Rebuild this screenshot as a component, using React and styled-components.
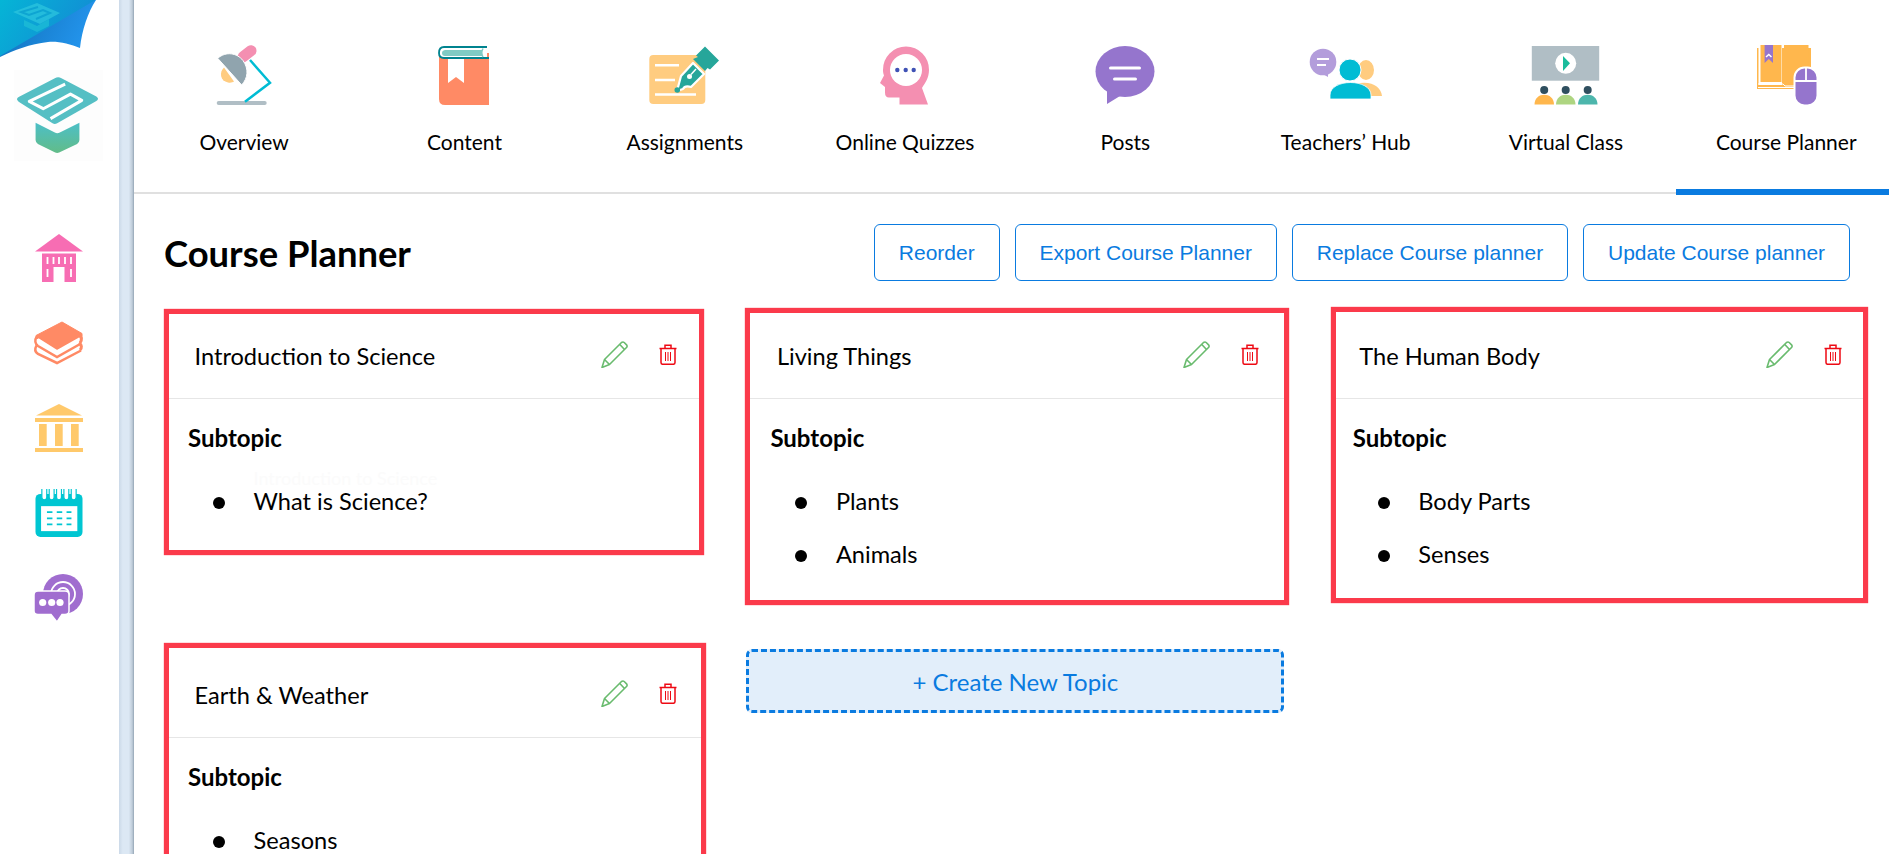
import styled, { createGlobalStyle } from "styled-components"

const GlobalStyle = createGlobalStyle`
  * { box-sizing: border-box; }
  html, body { margin: 0; height: 854px; overflow: hidden; background: #fff; }
  body { font-family: "Lato", "Liberation Sans", sans-serif; color: #000; }
`

const tabs = [
  { label: "Overview", icon: LampIcon },
  { label: "Content", icon: BookIcon },
  { label: "Assignments", icon: PenIcon },
  { label: "Online Quizzes", icon: HeadIcon },
  { label: "Posts", icon: BubbleIcon },
  { label: "Teachers’ Hub", icon: PeopleIcon },
  { label: "Virtual Class", icon: ClassIcon },
  { label: "Course Planner", icon: PlannerIcon, active: true },
]

const actions = ["Reorder", "Export Course Planner", "Replace Course planner", "Update Course planner"]

const topics = [
  { name: "Introduction to Science", items: ["What is Science?"], ghost: "Introduction to Science", mark: { top: -2.5, left: -3.5, right: -2, height: 246.2 } },
  { name: "Living Things", items: ["Plants", "Animals"], mark: { top: -2.7, left: -5, right: -4.7, height: 296.4 } },
  { name: "The Human Body", items: ["Body Parts", "Senses"], mark: { top: -4.3, left: -1.7, right: -0.8, height: 296 } },
  { name: "Earth & Weather", items: ["Seasons"], mark: { top: -7.3, left: -3.5, right: -4, height: 300 } },
]

export default function App() {
  return (
    <Page>
      <GlobalStyle />
      <Ribbon />
      <Sidebar>
        <LogoBox><Logo /></LogoBox>
        <SideIcons>
          <SchoolIcon />
          <StackIcon />
          <ColumnsIcon />
          <CalendarIcon />
          <TalkIcon />
        </SideIcons>
      </Sidebar>
      <Strip />
      <Main>
        <TabBar>
          {tabs.map((t) => (
            <Tab key={t.label} $active={t.active}>
              <t.icon />
              <TabLabel>{t.label}</TabLabel>
            </Tab>
          ))}
        </TabBar>
        <TitleRow>
          <Title>Course Planner</Title>
          <Actions>
            {actions.map((a) => <ActionButton key={a}>{a}</ActionButton>)}
          </Actions>
        </TitleRow>
        <Board>
          {topics.slice(0, 3).map((t) => <TopicCard key={t.name} topic={t} />)}
          <TopicCard topic={topics[3]} />
          <CreateTopic>+ Create New Topic</CreateTopic>
        </Board>
      </Main>
    </Page>
  )
}

function TopicCard({ topic }) {
  return (
    <Card>
      <CardHead>
        <CardTitle>{topic.name}</CardTitle>
        <CardTools>
          <PencilIcon />
          <TrashIcon />
        </CardTools>
      </CardHead>
      <CardBody>
        <Subtopic>Subtopic</Subtopic>
        <SubList>
          {topic.items.map((i) => (
            <SubItem key={i}>
              {topic.ghost && <Ghost>{topic.ghost}</Ghost>}
              {i}
            </SubItem>
          ))}
        </SubList>
      </CardBody>
      <RedMark $top={topic.mark.top} $left={topic.mark.left} $right={topic.mark.right} $height={topic.mark.height} />
    </Card>
  )
}

/* ---- icons ---- */

function Ribbon() {
  return (
    <RibbonSvg viewBox="0 0 100 60">
      <defs>
        <linearGradient id="ribA" x1="0" y1="0" x2="1" y2="0.4">
          <stop offset="0" stopColor="#05b5d6" />
          <stop offset="1" stopColor="#138bd4" />
        </linearGradient>
        <linearGradient id="ribB" x1="0" y1="0" x2="1" y2="0.3">
          <stop offset="0" stopColor="#0f6fb8" />
          <stop offset="1" stopColor="#2394ec" />
        </linearGradient>
      </defs>
      <path d="M0 0H96C88 12 82 30 80 48C70 44 58 41 48 42C30 44 14 50 0 57Z" fill="url(#ribB)" />
      <path d="M0 0H95.500L0 56Z" fill="url(#ribA)" />
      <path d="M37 3L60 13L40 24L13 12Z" fill="#2cc4de" opacity=".75" />
      <path d="M38 7L21 12L29 15L43 10L50 13L36 19" fill="none" stroke="#0ea5d2" strokeWidth="2" />
      <path d="M24 20L37 26L49 19V26L37 32L24 26Z" fill="#1fbfd6" opacity=".7" />
    </RibbonSvg>
  )
}

function Logo() {
  return (
    <svg width="89" height="91" viewBox="42 210 268 273">
      <defs>
        <linearGradient id="logoG" x1="0" y1="0" x2="0" y2="1">
          <stop offset="0" stopColor="#4cbfc8" />
          <stop offset="1" stopColor="#62bc88" />
        </linearGradient>
      </defs>
      <path d="M165 234Q175 228 185 234L290 289Q300 296 290 303L172 370Q165 374 158 370L56 305Q46 297 56 291Z" fill="#55bfc4" />
      <path d="M196 252L88 304L130 326L212 282L246 301L152 356" fill="none" stroke="#fff" strokeWidth="9" strokeLinejoin="round" />
      <path d="M107 368L165 398Q172 402 180 398L239 368V420Q239 428 232 432L178 458Q172 461 166 458L114 432Q107 428 107 420Z" fill="url(#logoG)" />
    </svg>
  )
}

function SchoolIcon() {
  return (
    <SideGlyph viewBox="0 0 48 48">
      <path d="M24 0L48 17.500H0Z" fill="#f76db3" />
      <path d="M7 19.500H41V48H29.500V33H18.500V48H7Z" fill="#f76db3" />
      <g stroke="#fff" strokeWidth="1.800">
        <path d="M12.500 23V30M18.500 23V30M24 23V30M30 23V30M36 23V30M12.500 35V43M36 35V43" />
      </g>
    </SideGlyph>
  )
}

function StackIcon() {
  return (
    <SideGlyph viewBox="0 0 48 42">
      <path d="M27 0L47 11.500V14L22 28L1 15.500V13.500Z" fill="#ff8a65" stroke="#ff8a65" strokeLinejoin="round" />
      <path d="M3 17L22 29L45 16" fill="none" stroke="#fff" strokeWidth="2" />
      <path d="M1.500 15C-0.500 18 0 22 3 24L22 35L46 21.500" fill="none" stroke="#ff8a65" strokeWidth="2.500" />
      <path d="M1.500 23.500C-0.500 27 0 30 3 32L22 41L46 28.500" fill="none" stroke="#ff8a65" strokeWidth="2.500" />
      <path d="M44 12.500C47 15 47 18 45 21" fill="none" stroke="#ff8a65" strokeWidth="3" />
      <path d="M44 21C47 23 47 26 45 28" fill="none" stroke="#ff8a65" strokeWidth="3" />
    </SideGlyph>
  )
}

function ColumnsIcon() {
  return (
    <SideGlyph viewBox="0 0 48 48">
      <g fill="#ffc96b">
        <path d="M24 0L47 11.500H1Z" />
        <rect x="0" y="14" width="48" height="4" />
        <rect x="4" y="20" width="7.700" height="22" />
        <rect x="20" y="20" width="7.700" height="22" />
        <rect x="36" y="20" width="7.700" height="22" />
        <rect x="0" y="44" width="48" height="4" />
      </g>
    </SideGlyph>
  )
}

function CalendarIcon() {
  return (
    <SideGlyph viewBox="0 0 48 49">
      <rect x="0" y="5" width="48" height="44" rx="5" fill="#00c6d2" />
      <rect x="5.700" y="17.500" width="37" height="25.500" fill="#fff" />
      <g fill="#fff" stroke="#00c6d2" strokeWidth="1.200">
        <path d="M6.500 0V8.500a2.500 2.500 0 0 0 5 0V0" />
        <path d="M14 0V8.500a2.500 2.500 0 0 0 5 0V0" />
        <path d="M21.500 0V8.500a2.500 2.500 0 0 0 5 0V0" />
        <path d="M29 0V8.500a2.500 2.500 0 0 0 5 0V0" />
        <path d="M36.500 0V8.500a2.500 2.500 0 0 0 5 0V0" />
      </g>
      <path d="M11.700 23.500h5.600M21.700 23.500h5.600M31.700 23.500h5M11.700 30h5.600M21.700 30h5.600M31.700 30h5M11.700 36h5.600M21.700 36h5.600M31.700 36h5" stroke="#00c6d2" strokeWidth="1.800" />
    </SideGlyph>
  )
}

function TalkIcon() {
  return (
    <SideGlyph viewBox="0 0 48 48">
      <circle cx="28" cy="20" r="20" fill="#a06dcf" />
      <circle cx="28" cy="20" r="12" fill="none" stroke="#fff" strokeWidth="1.800" />
      <circle cx="28" cy="20" r="6" fill="none" stroke="#fff" strokeWidth="1.800" />
      <path d="M3 17H30Q34 17 34 21V37Q34 40.500 30 40.500H27L22 48L16 40.500H3Q-1 40.500 -1 37V21Q-1 17 3 17Z" fill="#a06dcf" stroke="#fff" strokeWidth="1.500" />
      <circle cx="7.700" cy="28.500" r="3.600" fill="#fff" />
      <circle cx="16.700" cy="28.500" r="3.600" fill="#fff" />
      <circle cx="25" cy="28.500" r="3.600" fill="#fff" />
    </SideGlyph>
  )
}

function LampIcon() {
  return (
    <TabGlyph viewBox="-5 0 70 60">
      <rect x="2.700" y="56" width="50" height="4" rx="2" fill="#b0bec5" />
      <path d="M36 15L56 37.700L31 56.700" fill="none" stroke="#00bcd4" strokeWidth="2.500" />
      <path d="M29.300 11.700L37 5.700" stroke="#f48fb1" strokeWidth="11" strokeLinecap="round" />
      <path d="M10 22.500C5 27 6 36 14 37.500C17 38 18.500 37.300 20 36.500Z" fill="#ffcc80" />
      <path d="M3.700 13.300L27.700 40C34 33 35 24 29 15.500C23 8 12 6 3.700 13.300Z" fill="#90a4ae" stroke="#fff" strokeWidth="1" />
    </TabGlyph>
  )
}

function BookIcon() {
  return (
    <TabGlyph viewBox="-5 0 70 60">
      <path d="M5 8H55V60H11Q5 60 5 54Z" fill="#ff8a65" />
      <path d="M10 2H53V13H10Q5 13 5 8Q5 2 10 2Z" fill="#fff" />
      <path d="M8 8Q8 5.500 11 5H48Q47 8 49 11H11Q8 11 8 8Z" fill="#80cbc4" />
      <path d="M53 2H10Q5 2 5 8Q5 13 10 13H55" fill="none" stroke="#00838f" strokeWidth="1.800" />
      <path d="M49 3.500Q46.500 8 49 12" fill="none" stroke="#80cbc4" strokeWidth="1.500" />
      <path d="M14 14H30V38L22 32L14 38Z" fill="#fff" />
    </TabGlyph>
  )
}

function PenIcon() {
  return (
    <TabGlyph viewBox="-5 0 70 60">
      <rect x="-5.700" y="10" width="56" height="49" rx="4" fill="#ffcc80" />
      <path d="M0 20.300H24M0 35H20M0 49.500H41" stroke="#fff" strokeWidth="2.400" />
      <path d="M22 46L26 31L38 18L49 29L36 42Q30 40 28 44Z" fill="#26a69a" stroke="#fff" strokeWidth="2.200" strokeLinejoin="round" />
      <path d="M41 10.500L50 1.500L64 15.500L55 24.500L52.500 23L50 26L38 14L43 12Z" fill="#26a69a" />
      <circle cx="22.300" cy="45" r="2.800" fill="#26a69a" />
      <circle cx="34.500" cy="31.500" r="2.500" fill="#fff" />
      <path d="M36 29.500L41 24" stroke="#fff" strokeWidth="1.500" />
    </TabGlyph>
  )
}

function HeadIcon() {
  return (
    <TabGlyph viewBox="-5 0 70 60">
      <path d="M31 1.500A23 23 0 0 1 54 25C54 33 50 38 47 43L53 59.500H24.500V52.500H14Q10 52.500 10 47.500V42L5 38L9 30.500C8 28 8 26 8 25A23 23 0 0 1 31 1.500Z" fill="#f48fb1" />
      <circle cx="31" cy="25" r="16" fill="#fff" />
      <circle cx="22.300" cy="25" r="2.200" fill="#3f51b5" />
      <circle cx="30.700" cy="25" r="2.200" fill="#3f51b5" />
      <circle cx="38.700" cy="25" r="2.200" fill="#3f51b5" />
    </TabGlyph>
  )
}

function BubbleIcon() {
  return (
    <TabGlyph viewBox="-5 0 70 60">
      <ellipse cx="30" cy="26.500" rx="29.500" ry="25.500" fill="#9575cd" />
      <path d="M12 44V59L25 51Z" fill="#9575cd" />
      <path d="M15.500 23H44.500M19.500 34H40.500" stroke="#fff" strokeWidth="3" strokeLinecap="round" />
    </TabGlyph>
  )
}

function PeopleIcon() {
  return (
    <TabGlyph viewBox="-5 0 70 60">
      <ellipse cx="50" cy="25" rx="8" ry="10" fill="#ffcc80" />
      <path d="M40 39C55 35 65 42 66 51H40Z" fill="#ffcc80" />
      <circle cx="7" cy="17" r="13.300" fill="#b39ddb" />
      <path d="M5 28L12 32V26Z" fill="#b39ddb" />
      <path d="M1 14H13M1 20H10" stroke="#fff" strokeWidth="1.800" />
      <ellipse cx="34" cy="25" rx="11" ry="11" fill="#00bcd4" stroke="#fff" strokeWidth="1" />
      <path d="M14 54V50C14 42 24 37.500 34.500 37.500C45 37.500 55 42 55 50V54Z" fill="#00bcd4" stroke="#fff" strokeWidth=".8" />
    </TabGlyph>
  )
}

function ClassIcon() {
  return (
    <TabGlyph viewBox="-5 0 70 60">
      <rect x="-4.200" y="1" width="67.400" height="34.700" fill="#b0bec5" />
      <ellipse cx="29.700" cy="18.300" rx="10.500" ry="10.500" fill="#fff" />
      <path d="M27 11L34 18.300L27 26Z" fill="#1abc9c" />
      <circle cx="8.200" cy="45" r="4" fill="#2f4f5f" />
      <circle cx="29.700" cy="45" r="4" fill="#2f4f5f" />
      <circle cx="51.700" cy="45" r="4" fill="#2f4f5f" />
      <path d="M-1.500 59.500C-1.500 46.500 18 46.500 18 59.500Z" fill="#ffb74d" />
      <path d="M20 59.500C20 46.500 39.500 46.500 39.500 59.500Z" fill="#aed581" />
      <path d="M42 59.500C42 46.500 61.500 46.500 61.500 59.500Z" fill="#4db6ac" />
    </TabGlyph>
  )
}

function PlannerIcon() {
  return (
    <TabGlyph viewBox="-5 0 70 60">
      <path d="M1 3H2.500V40H26V3H52V3H55V30H45V44H1Z" fill="#ffb74d" />
      <path d="M4.500 0H25.500V37H4.500ZM28 0H52.500V40H28Z" fill="#ffb74d" />
      <path d="M2 39H27L29 41H46M2 42.500H46" stroke="#fff" strokeWidth="1" fill="none" />
      <path d="M8.600 0H17V18L12.800 14L8.600 18Z" fill="#9575cd" />
      <path d="M10 12L12.800 9.500L15.500 12" stroke="#fff" strokeWidth="1.500" fill="none" />
      <rect x="38.500" y="22.500" width="23" height="38" rx="10" fill="#9575cd" stroke="#fff" strokeWidth="2" />
      <path d="M39 36H61M50 23V36" stroke="#fff" strokeWidth="1.800" />
    </TabGlyph>
  )
}

function PencilIcon() {
  return (
    <svg width="27" height="27" viewBox="0 0 27 27" fill="none" stroke="#69bb6e" strokeWidth="1.600" strokeLinejoin="round">
      <path d="M1 26.500L3.500 18.500L20.500 1.500Q22 0.500 23.200 1.500L25.800 4.100Q26.500 5.500 25.500 6.500L8.500 23.500Z" />
      <path d="M3.500 18.500L8.500 23.500M18.800 3.500L23.500 8.500" />
    </svg>
  )
}

function TrashIcon() {
  return (
    <svg width="18" height="21" viewBox="0 0 18 21" fill="none" stroke="#ee0a14" strokeWidth="1.500">
      <path d="M0.500 4.500H17.500M6 4V1.200H12V4" />
      <path d="M2 4.500V18.500Q2 20.300 3.800 20.300H14.200Q16 20.300 16 18.500V4.500" />
      <path d="M6.500 8V17M9 8V17M11.500 8V17" strokeWidth="1" />
    </svg>
  )
}

/* ---- layout ---- */

const Page = styled.div`
  position: relative;
  display: flex;
  width: 1889px;
  height: 854px;
  overflow: hidden;
  background: #fff;
`

const RibbonSvg = styled.svg`
  position: absolute;
  top: 0;
  left: 0;
  width: 100px;
  height: 60px;
`

const Sidebar = styled.aside`
  flex: none;
  width: 119px;
  display: flex;
  flex-direction: column;
  padding: 70px 0 0 14px;
`

const LogoBox = styled.div`
  width: 89px;
  height: 91px;
  background: #fdfdfd;
`

const SideIcons = styled.div`
  display: flex;
  flex-direction: column;
  gap: 37px;
  margin: 73px 0 0 21px;
`

const SideGlyph = styled.svg`
  display: block;
  width: 48px;
  height: 48px;
  overflow: visible;
`

const Strip = styled.div`
  flex: none;
  width: 15px;
  background: linear-gradient(90deg, #cbd9e8 0, #dce8f4 25%, #dce8f4 65%, #bfccd9 88%, #94a5b5 100%);
`

const Main = styled.main`
  flex: 1;
  min-width: 0;
`

const TabBar = styled.nav`
  display: flex;
  height: 194px;
  border-bottom: 2px solid #e0e0e0;
`

const Tab = styled.div`
  position: relative;
  flex: none;
  width: 220.3px;
  height: 195px;
  padding-top: 45px;
  display: flex;
  flex-direction: column;
  align-items: center;
  &::after {
    content: "";
    display: ${(p) => (p.$active ? "block" : "none")};
    position: absolute;
    left: 0;
    right: 0;
    bottom: 0;
    height: 6px;
    background: #0a7be0;
  }
`

const TabGlyph = styled.svg`
  display: block;
  flex: none;
  width: 70px;
  height: 60px;
  overflow: visible;
`

const TabLabel = styled.div`
  margin-top: 24px;
  font-size: 21px;
  line-height: 26px;
  white-space: nowrap;
`

const TitleRow = styled.div`
  display: flex;
  align-items: center;
  justify-content: space-between;
  height: 57px;
  margin-top: 30px;
  padding: 0 39px 0 30px;
`

const Title = styled.h1`
  margin: 0;
  font-size: 36.4px;
  font-weight: 700;
  line-height: 44px;
`

const Actions = styled.div`
  display: flex;
  gap: 15px;
`

const ActionButton = styled.button`
  height: 57px;
  padding: 0 23.9px;
  background: #fff;
  border: 1.5px solid #0a7be0;
  border-radius: 6px;
  color: #0a7be0;
  font-family: "Liberation Sans", Arial, sans-serif;
  font-size: 21px;
`

const Board = styled.section`
  display: grid;
  grid-template-columns: repeat(3, 534.5px);
  column-gap: 47.9px;
  row-gap: 46px;
  align-items: start;
  margin-top: 30px;
  padding-left: 33.5px;
`

const Card = styled.article`
  position: relative;
`

const RedMark = styled.div`
  position: absolute;
  top: ${(p) => p.$top}px;
  left: ${(p) => p.$left}px;
  right: ${(p) => p.$right}px;
  height: ${(p) => p.$height}px;
  border: 5px solid #fb3a4b;
  box-shadow: 0 0 1px #fb3a4b;
  pointer-events: none;
`

const CardHead = styled.header`
  display: flex;
  align-items: center;
  justify-content: space-between;
  height: 88px;
  padding: 0 25px 0 27px;
  border-bottom: 1px solid #e6e6e6;
`

const CardTitle = styled.h3`
  margin: 2px 0 0;
  font-size: 23.6px;
  font-weight: 400;
  line-height: 30px;
`

const CardTools = styled.div`
  display: flex;
  align-items: center;
  gap: 31px;
`

const CardBody = styled.div`
  padding: 24px 20.5px;
`

const Subtopic = styled.div`
  font-size: 24px;
  font-weight: 700;
  line-height: 30px;
`

const SubList = styled.ul`
  list-style: none;
  margin: 21px 0 0;
  padding: 0 0 0 25px;
`

const SubItem = styled.li`
  position: relative;
  display: flex;
  align-items: center;
  height: 53px;
  font-size: 23.6px;
  &::before {
    content: "";
    flex: none;
    width: 12px;
    height: 12px;
    margin: 4px 28.500px 0 0;
    border-radius: 50%;
    background: #000;
  }
`

const Ghost = styled.span`
  position: absolute;
  left: 40.500px;
  top: -7px;
  font-size: 18px;
  color: #fbfbfb;
`

const CreateTopic = styled.button`
  height: 64px;
  width: 538px;
  margin: -1px 0 0 -3.500px;
  background: #e2eefa;
  border: 3px dashed #0a7be0;
  border-radius: 6px;
  color: #0a7be0;
  font-family: "Lato", sans-serif;
  font-size: 24px;
`
